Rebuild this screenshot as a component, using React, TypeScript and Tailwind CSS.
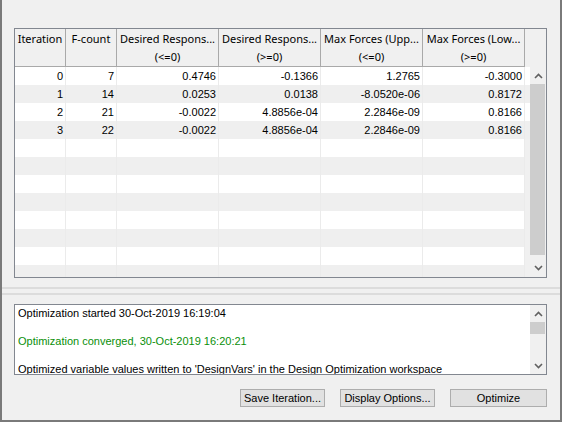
import React from 'react';

const cols = [
  { w: 'w-[51px]', top: 'Iteration', sub: '' },
  { w: 'w-[51px]', top: 'F-count', sub: '' },
  { w: 'w-[102px]', top: 'Desired Respons...', sub: '(<=0)' },
  { w: 'w-[102px]', top: 'Desired Respons...', sub: '(>=0)' },
  { w: 'w-[102px]', top: 'Max Forces (Upp...', sub: '(<=0)' },
  { w: 'w-[102px]', top: 'Max Forces (Low...', sub: '(>=0)' },
];

const data = [
  ['0', '7', '0.4746', '-0.1366', '1.2765', '-0.3000'],
  ['1', '14', '0.0253', '0.0138', '-8.0520e-06', '0.8172'],
  ['2', '21', '-0.0022', '4.8856e-04', '2.2846e-09', '0.8166'],
  ['3', '22', '-0.0022', '4.8856e-04', '2.2846e-09', '0.8166'],
];

const Chevron = ({ up }: { up?: boolean }) => (
  <svg width="9" height="6" viewBox="0 0 9 6" className="block">
    <polyline
      points={up ? '1,5 4.5,1.5 8,5' : '1,1 4.5,4.5 8,1'}
      fill="none"
      stroke="#606060"
      strokeWidth="1.6"
    />
  </svg>
);

const Btn = ({ label, w }: { label: string; w: string }) => (
  <button
    type="button"
    className={`${w} h-[18px] bg-[#e1e1e1] border border-[#adadad] text-[11px] leading-none text-black flex items-center justify-center`}
  >
    {label}
  </button>
);

export default function App() {
  const rows = Array.from({ length: 12 }, (_, i) => i);
  return (
    <div
      className="w-[562px] h-[422px] bg-[#f0f0f0] border-l-2 border-r-2 border-b-2 border-[#7a7a7a] flex flex-col overflow-hidden"
      style={{ fontFamily: '"Liberation Sans", Arial, sans-serif' }}
    >
      {/* results table */}
      <div className="pt-[28px] pl-[12px]">
        <div className="w-[533px] h-[250px] border border-[#828790] flex bg-[#f0f0f0]">
          <div className="w-[515px] flex flex-col overflow-hidden">
            <div
              className="flex h-[38px] border-b border-[#a9a9a9] w-[510px] shrink-0"
              style={{ fontFamily: '"Noto Sans", "Open Sans", sans-serif' }}
            >
              {cols.map((c, i) => (
                <div
                  key={i}
                  className={`${c.w} shrink-0 border-r border-[#a9a9a9] flex flex-col items-center text-[11px] leading-[18px] text-black overflow-hidden whitespace-nowrap pt-[1px]`}
                >
                  <span>{c.top}</span>
                  <span>{c.sub}</span>
                </div>
              ))}
            </div>
            {rows.map((r) => {
              const vals = data[r];
              const bg = r % 2 === 0 ? 'bg-white' : 'bg-[#efefef]';
              return (
                <div key={r} className={`flex h-[18px] shrink-0 ${vals ? 'w-[515px]' : 'w-[510px]'} ${bg}`}>
                  {cols.map((c, i) => (
                    <div
                      key={i}
                      className={`${c.w} shrink-0 border-r border-[#ebebeb] text-right pr-[2px] text-[11px] leading-[18px] text-black whitespace-nowrap`}
                    >
                      {vals ? vals[i] : ''}
                    </div>
                  ))}
                </div>
              );
            })}
          </div>
          {/* vertical scrollbar */}
          <div className="w-[16px] flex flex-col pt-[38px]">
            <div className="h-[17px] flex items-center justify-center">
              <Chevron up />
            </div>
            <div className="h-[171px] w-[15px] bg-[#cdcdcd]" />
            <div className="h-[4px]" />
            <div className="h-[17px] flex items-center justify-center">
              <Chevron />
            </div>
          </div>
        </div>
      </div>

      {/* splitter */}
      <div className="mt-[9px] h-[2px] bg-[#dcdcdc]" />
      <div className="mt-[4px] h-[2px] bg-[#dcdcdc]" />

      {/* log */}
      <div className="mt-[9px] pl-[12px]">
        <div className="w-[533px] h-[71px] border border-[#828790] bg-white flex">
          <div className="w-[515px] pl-[3px] pt-[1px] text-[11px] leading-[14px] text-black whitespace-nowrap overflow-hidden">
            <div>Optimization started 30-Oct-2019 16:19:04</div>
            <div>&nbsp;</div>
            <div className="text-[#0a8f0a]">Optimization converged, 30-Oct-2019 16:20:21</div>
            <div>&nbsp;</div>
            <div>Optimized variable values written to 'DesignVars' in the Design Optimization workspace</div>
          </div>
          <div className="w-[16px] flex flex-col bg-[#f0f0f0]">
            <div className="h-[17px] flex items-center justify-center">
              <Chevron up />
            </div>
            <div className="h-[12px] w-[15px] bg-[#cdcdcd]" />
            <div className="flex-1" />
            <div className="h-[17px] flex items-center justify-center">
              <Chevron />
            </div>
          </div>
        </div>
      </div>

      {/* buttons */}
      <div className="mt-[14px] flex justify-end gap-[15px] pr-[13px]">
        <Btn label="Save Iteration..." w="w-[85px]" />
        <Btn label="Display Options..." w="w-[95px]" />
        <Btn label="Optimize" w="w-[97px]" />
      </div>
    </div>
  );
}
